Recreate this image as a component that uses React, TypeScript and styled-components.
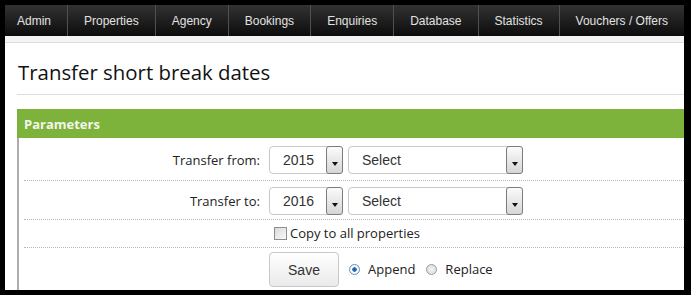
import React from 'react';
import styled, { createGlobalStyle } from 'styled-components';

const GlobalStyle = createGlobalStyle`
  html, body {
    margin: 0;
    padding: 0;
    background: #000;
  }
`;

const navItems = ['Admin', 'Properties', 'Agency', 'Bookings', 'Enquiries', 'Database', 'Statistics', 'Vouchers / Offers'];

const Page = styled.div`
  margin: 5px 7px 5px 5px;
  height: 285px;
  overflow: hidden;
  background: #fff;
`;

const NavBar = styled.nav`
  display: flex;
  height: 31px;
  overflow: hidden;
  background: linear-gradient(#323232, #0c0c0c);
`;

const NavItem = styled.a`
  display: flex;
  flex-shrink: 0;
  align-items: center;
  padding: 0 16px;
  border-right: 1px solid #505050;
  font-family: 'Liberation Sans', Arial, sans-serif;
  font-size: 12px;
  white-space: nowrap;
  color: #e2e2e2;
  text-decoration: none;

  &:first-child {
    padding-left: 12px;
  }
`;

const NavShadow = styled.div`
  height: 6px;
  background: #f4f4f4;
  border-bottom: 1px solid #dcdcdc;
`;

const Content = styled.main`
  padding-left: 12px;
`;

const Title = styled.h1`
  margin: 16px 0 0;
  padding: 0 0 8px 1px;
  border-bottom: 1px solid #dedede;
  font-family: 'Open Sans', sans-serif;
  font-weight: 400;
  font-size: 20.4px;
  line-height: 27px;
  color: #111;
`;

const Panel = styled.section`
  margin-top: 14px;
`;

const PanelHeader = styled.h2`
  margin: 0;
  height: 29px;
  padding-left: 7px;
  background: #7db23b;
  font-family: 'Open Sans', sans-serif;
  font-weight: 700;
  font-size: 13px;
  line-height: 30px;
  color: #f2f6ea;
`;

const PanelBody = styled.div`
  border-left: 2px solid #adadad;
  padding-left: 5px;
`;

const Row = styled.div<{ pad: string }>`
  display: flex;
  align-items: center;
  padding: ${({ pad }) => pad};
  border-bottom: 1px dotted #b8b8b8;

  &:last-child {
    border-bottom: none;
  }
`;

const Label = styled.label`
  width: 236px;
  margin-right: 9px;
  text-align: right;
  font-family: 'Open Sans', sans-serif;
  font-size: 13px;
  color: #222;
`;

const Field = styled.div<{ offset?: number }>`
  display: flex;
  align-items: center;
  gap: 5px;
  margin-left: ${({ offset = 245 }) => offset}px;
`;

const SelectBox = styled.div<{ width: number }>`
  display: flex;
  align-items: stretch;
  width: ${({ width }) => width}px;
  height: 28px;
  box-sizing: border-box;
  border: 1px solid #c9c9c9;
  border-radius: 4px;
  background: #fff;
`;

const SelectValue = styled.span`
  flex: 1;
  display: flex;
  align-items: center;
  padding-left: 13px;
  font-family: 'Liberation Sans', Arial, sans-serif;
  font-size: 14px;
  color: #333;
`;

const SelectArrow = styled.span`
  display: flex;
  justify-content: center;
  align-items: center;
  width: 15px;
  margin: -1px -1px -1px 0;
  border: 1px solid #7c7c7c;
  border-radius: 3px;
  background: linear-gradient(#fbfbfb, #d6d6d6);

  &::after {
    content: '';
    margin-top: 8px;
    border-left: 3.5px solid transparent;
    border-right: 3.5px solid transparent;
    border-top: 4px solid #111;
  }
`;

const CheckLabel = styled.label`
  display: flex;
  align-items: center;
  font-family: 'Open Sans', sans-serif;
  font-size: 13px;
  line-height: 17px;
  color: #222;
`;

const CheckBox = styled.input`
  appearance: none;
  box-sizing: border-box;
  width: 13px;
  height: 13px;
  margin: 0 3px 0 5px;
  border: 1px solid #8e8e8e;
  background: linear-gradient(135deg, #d8d8d8, #fbfbfb);
`;

const Radio = styled.input`
  appearance: none;
  box-sizing: border-box;
  width: 11px;
  height: 11px;
  margin: 0 8px 0 0;
  border: 1px solid #9a9a9a;
  border-radius: 50%;
  background: radial-gradient(circle, #f4f4f4 0, #d8d8d8 100%);

  &:checked {
    border-color: #6b8fb5;
    background: radial-gradient(circle, #1f5f9f 0, #2b6fb3 2px, #fff 2.5px, #dfe8f1 100%);
  }
`;

const RadioLabel = styled(CheckLabel)`
  margin-right: 6px;
`;

const SaveButton = styled.button`
  width: 70px;
  height: 35px;
  margin-right: 5px;
  border: 1px solid #c8c8c8;
  border-radius: 4px;
  background: linear-gradient(#ffffff, #eaeaea);
  font-family: 'Liberation Sans', Arial, sans-serif;
  font-size: 14px;
  color: #333;
`;

const Select = ({ width, value }: { width: number; value: string }) => (
  <SelectBox width={width}>
    <SelectValue>{value}</SelectValue>
    <SelectArrow />
  </SelectBox>
);

export default function App() {
  return (
    <>
      <GlobalStyle />
      <Page>
        <NavBar>
          {navItems.map((item) => (
            <NavItem key={item} href="#">
              {item}
            </NavItem>
          ))}
        </NavBar>
        <NavShadow />
        <Content>
          <Title>Transfer short break dates</Title>
          <Panel>
            <PanelHeader>Parameters</PanelHeader>
            <PanelBody>
              <Row pad="8px 0 6px">
                <Label>Transfer from:</Label>
                <Field offset={0}>
                  <Select width={74} value="2015" />
                  <Select width={175} value="Select" />
                </Field>
              </Row>
              <Row pad="6px 0 4px">
                <Label>Transfer to:</Label>
                <Field offset={0}>
                  <Select width={74} value="2016" />
                  <Select width={175} value="Select" />
                </Field>
              </Row>
              <Row pad="5px 0 5px">
                <Field>
                  <CheckLabel>
                    <CheckBox type="checkbox" />
                    Copy to all properties
                  </CheckLabel>
                </Field>
              </Row>
              <Row pad="4px 0 4px">
                <Field>
                  <SaveButton type="button">Save</SaveButton>
                  <RadioLabel>
                    <Radio type="radio" name="mode" defaultChecked />
                    Append
                  </RadioLabel>
                  <RadioLabel>
                    <Radio type="radio" name="mode" />
                    Replace
                  </RadioLabel>
                </Field>
              </Row>
            </PanelBody>
          </Panel>
        </Content>
      </Page>
    </>
  );
}
